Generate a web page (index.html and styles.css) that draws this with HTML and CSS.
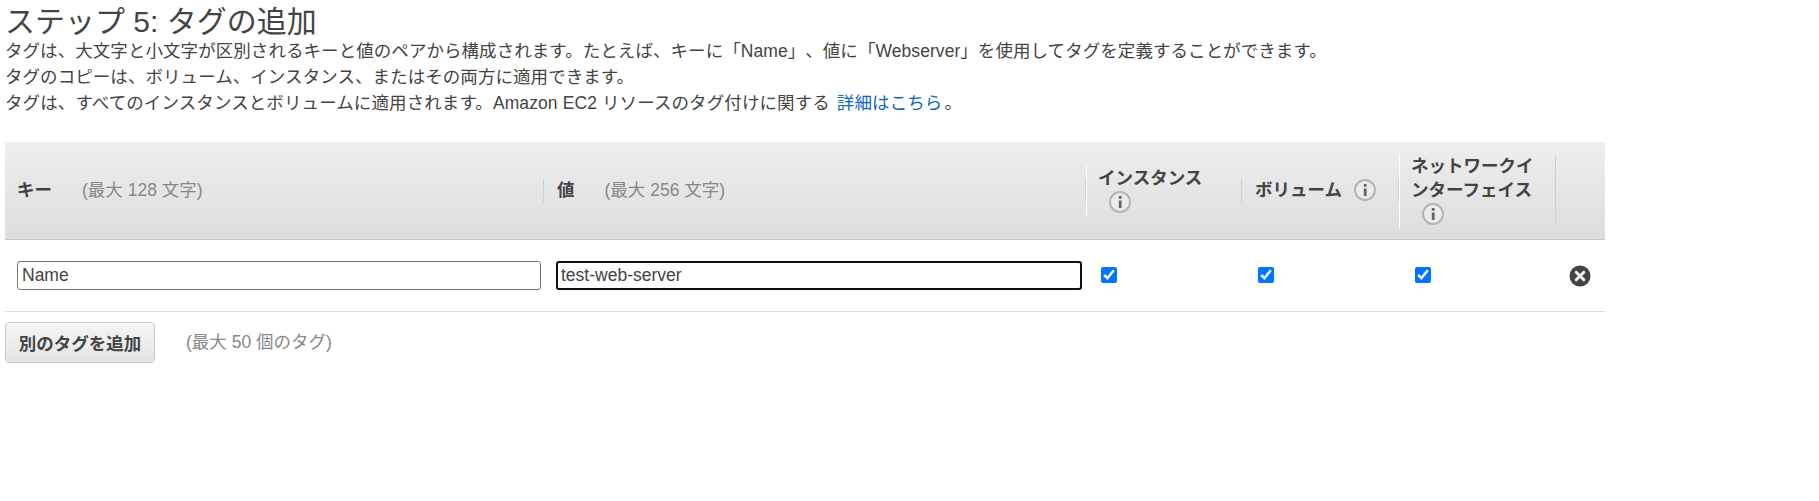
FILE: index.html
```html
<!DOCTYPE html>
<html lang="ja">
<head>
<meta charset="utf-8">
<title>ステップ 5: タグの追加</title>
<link rel="stylesheet" href="styles.css">
</head>
<body>
<main class="page">
  <h1 class="title">ステップ 5: タグの追加</h1>
  <div class="intro">
    <p>タグは、大文字と小文字が区別されるキーと値のペアから構成されます。たとえば、キーに「Name」、値に「Webserver」を使用してタグを定義することができます。</p>
    <p>タグのコピーは、ボリューム、インスタンス、またはその両方に適用できます。</p>
    <p class="wide">タグは、すべてのインスタンスとボリュームに適用されます。Amazon EC2 リソースのタグ付けに関する <a class="link" href="#">詳細はこちら</a>。</p>
  </div>
  <div class="tags">
    <div class="grid head">
      <div class="th plain"><b>キー</b><span class="limit">(最大 128 文字)</span></div>
      <div class="th plain sep value"><b>値</b><span class="limit limit-value">(最大 256 文字)</span></div>
      <div class="th sep white"><div class="label"><b>インスタンス</b><svg class="info" viewBox="0 0 22 22"><circle cx="11" cy="11" r="10"/><rect x="9.8" y="9.5" width="2.8" height="7.5"/><rect x="9.8" y="5" width="2.8" height="2.8"/></svg></div></div>
      <div class="th tall"><div class="label"><b>ボリューム</b><svg class="info" viewBox="0 0 22 22"><circle cx="11" cy="11" r="10"/><rect x="9.8" y="9.5" width="2.8" height="7.5"/><rect x="9.8" y="5" width="2.8" height="2.8"/></svg></div></div>
      <div class="th sep white"><div class="label"><b>ネットワークインターフェイス</b><svg class="info" viewBox="0 0 22 22"><circle cx="11" cy="11" r="10"/><rect x="9.8" y="9.5" width="2.8" height="7.5"/><rect x="9.8" y="5" width="2.8" height="2.8"/></svg></div></div>
      <div class="th last"></div>
    </div>
    <div class="grid row">
      <div class="td"><input class="field" type="text" value="Name"></div>
      <div class="td"><input class="field focused" type="text" value="test-web-server"></div>
      <div class="td box"><input class="check" type="checkbox" checked></div>
      <div class="td box nudge"><input class="check" type="checkbox" checked></div>
      <div class="td box nudge"><input class="check" type="checkbox" checked></div>
      <div class="td"><svg class="remove" viewBox="0 0 22 22"><circle cx="11" cy="11" r="10.5"/><path d="M7.2 7.2l7.6 7.6M14.8 7.2l-7.6 7.6"/></svg></div>
    </div>
    <div class="actions">
      <button class="add" type="button">別のタグを追加</button>
      <span class="max">(最大 50 個のタグ)</span>
    </div>
  </div>
</main>
</body>
</html>
```
FILE: styles.css
```css
* { box-sizing: border-box; }
html, body { margin: 0; background: #fff; }
body {
  font-family: "Liberation Sans", "Noto Sans CJK JP", sans-serif;
  font-size: 17.5px;
  color: #444;
  text-spacing-trim: space-all;
}
.page { width: 1605px; padding-left: 5px; }
.title {
  margin: 0;
  height: 38px;
  padding-top: 3px;
  font-size: 30px;
  line-height: 38px;
  font-weight: 400;
  color: #444;
}
.intro { height: 78px; margin-bottom: 26px; letter-spacing: 0.06px; }
.intro p { margin: 0; height: 26px; line-height: 26px; }
.intro .wide { letter-spacing: 0.1px; }
.link { color: #1166bb; text-decoration: none; margin-left: 2px; margin-right: 2px; }
.grid { display: grid; grid-template-columns: 539px 542px 156px 157px 157px 49px; }
.head {
  height: 98px;
  background: linear-gradient(#eeeeee, #dddddd);
  border-bottom: 1px solid #c8c8c8;
  align-items: center;
}
.th {
  position: relative;
  height: 97px;
  display: flex;
  align-items: center;
  padding-left: 12px;
  color: #444;
}
.plain { padding-bottom: 4px; }
.value { padding-left: 13px; }
.th b { font-weight: 700; }
.limit { color: #888; margin-left: 30px; }
.sep::before {
  content: "";
  position: absolute;
  left: -1px;
  top: 37px;
  height: 23px;
  border-left: 1px solid #cfcfcf;
}
.white .label { border-left: 1px solid #fff; margin-left: -12px; padding-left: 11px; }
.tall .label { border-left: 1px solid #d0d0d0; margin-left: -13px; padding-left: 13px; }
.last::before {
  content: "";
  position: absolute;
  left: -1px;
  top: 14px;
  height: 69px;
  border-left: 1px solid #cfcfcf;
}
.label { width: 137px; line-height: 24px; padding-bottom: 2px; }
.tall .label { width: 150px; }
.tall .info { margin-left: 12px; }
.label b { line-height: 24px; }
.info {
  display: inline-block;
  width: 22px;
  height: 22px;
  margin-left: 11px;
  vertical-align: -5px;
}
.info circle { fill: #ececec; stroke: #b4b4b4; stroke-width: 2; }
.info rect { fill: #666; }
.row { height: 72px; border-bottom: 1px solid #ddd; align-items: center; }
.td { display: flex; align-items: center; padding-left: 12px; }
.box { padding-left: 15px; }
.nudge { padding-left: 16px; }
.field {
  width: 524px;
  height: 29px;
  margin: 0;
  padding: 0 4px;
  border: 1px solid #767676;
  border-radius: 3px;
  font: 17.5px "Liberation Sans", sans-serif;
  color: #444;
  background: #fff;
  outline: none;
}
.focused { width: 526px; border: 2px solid #101010; padding: 0 3px; }
.check {
  width: 16px;
  height: 16px;
  margin: -1px 0 0 0;
  accent-color: #0075ff;
}
.remove { width: 22px; height: 22px; margin: 1px 0 0 1px; }
.remove circle { fill: #444; }
.remove path { stroke: #eee; stroke-width: 3; stroke-linecap: round; fill: none; }
.actions { display: flex; align-items: center; padding-top: 10px; }
.add {
  width: 150px;
  height: 41px;
  padding: 0;
  border: 1px solid #ccc;
  border-radius: 4px;
  background: linear-gradient(#f5f5f5, #e4e4e4);
  font: 700 17.5px "Liberation Sans", "Noto Sans CJK JP", sans-serif;
  color: #444;
}
.max { margin: -4px 0 0 31px; color: #888; }
```
